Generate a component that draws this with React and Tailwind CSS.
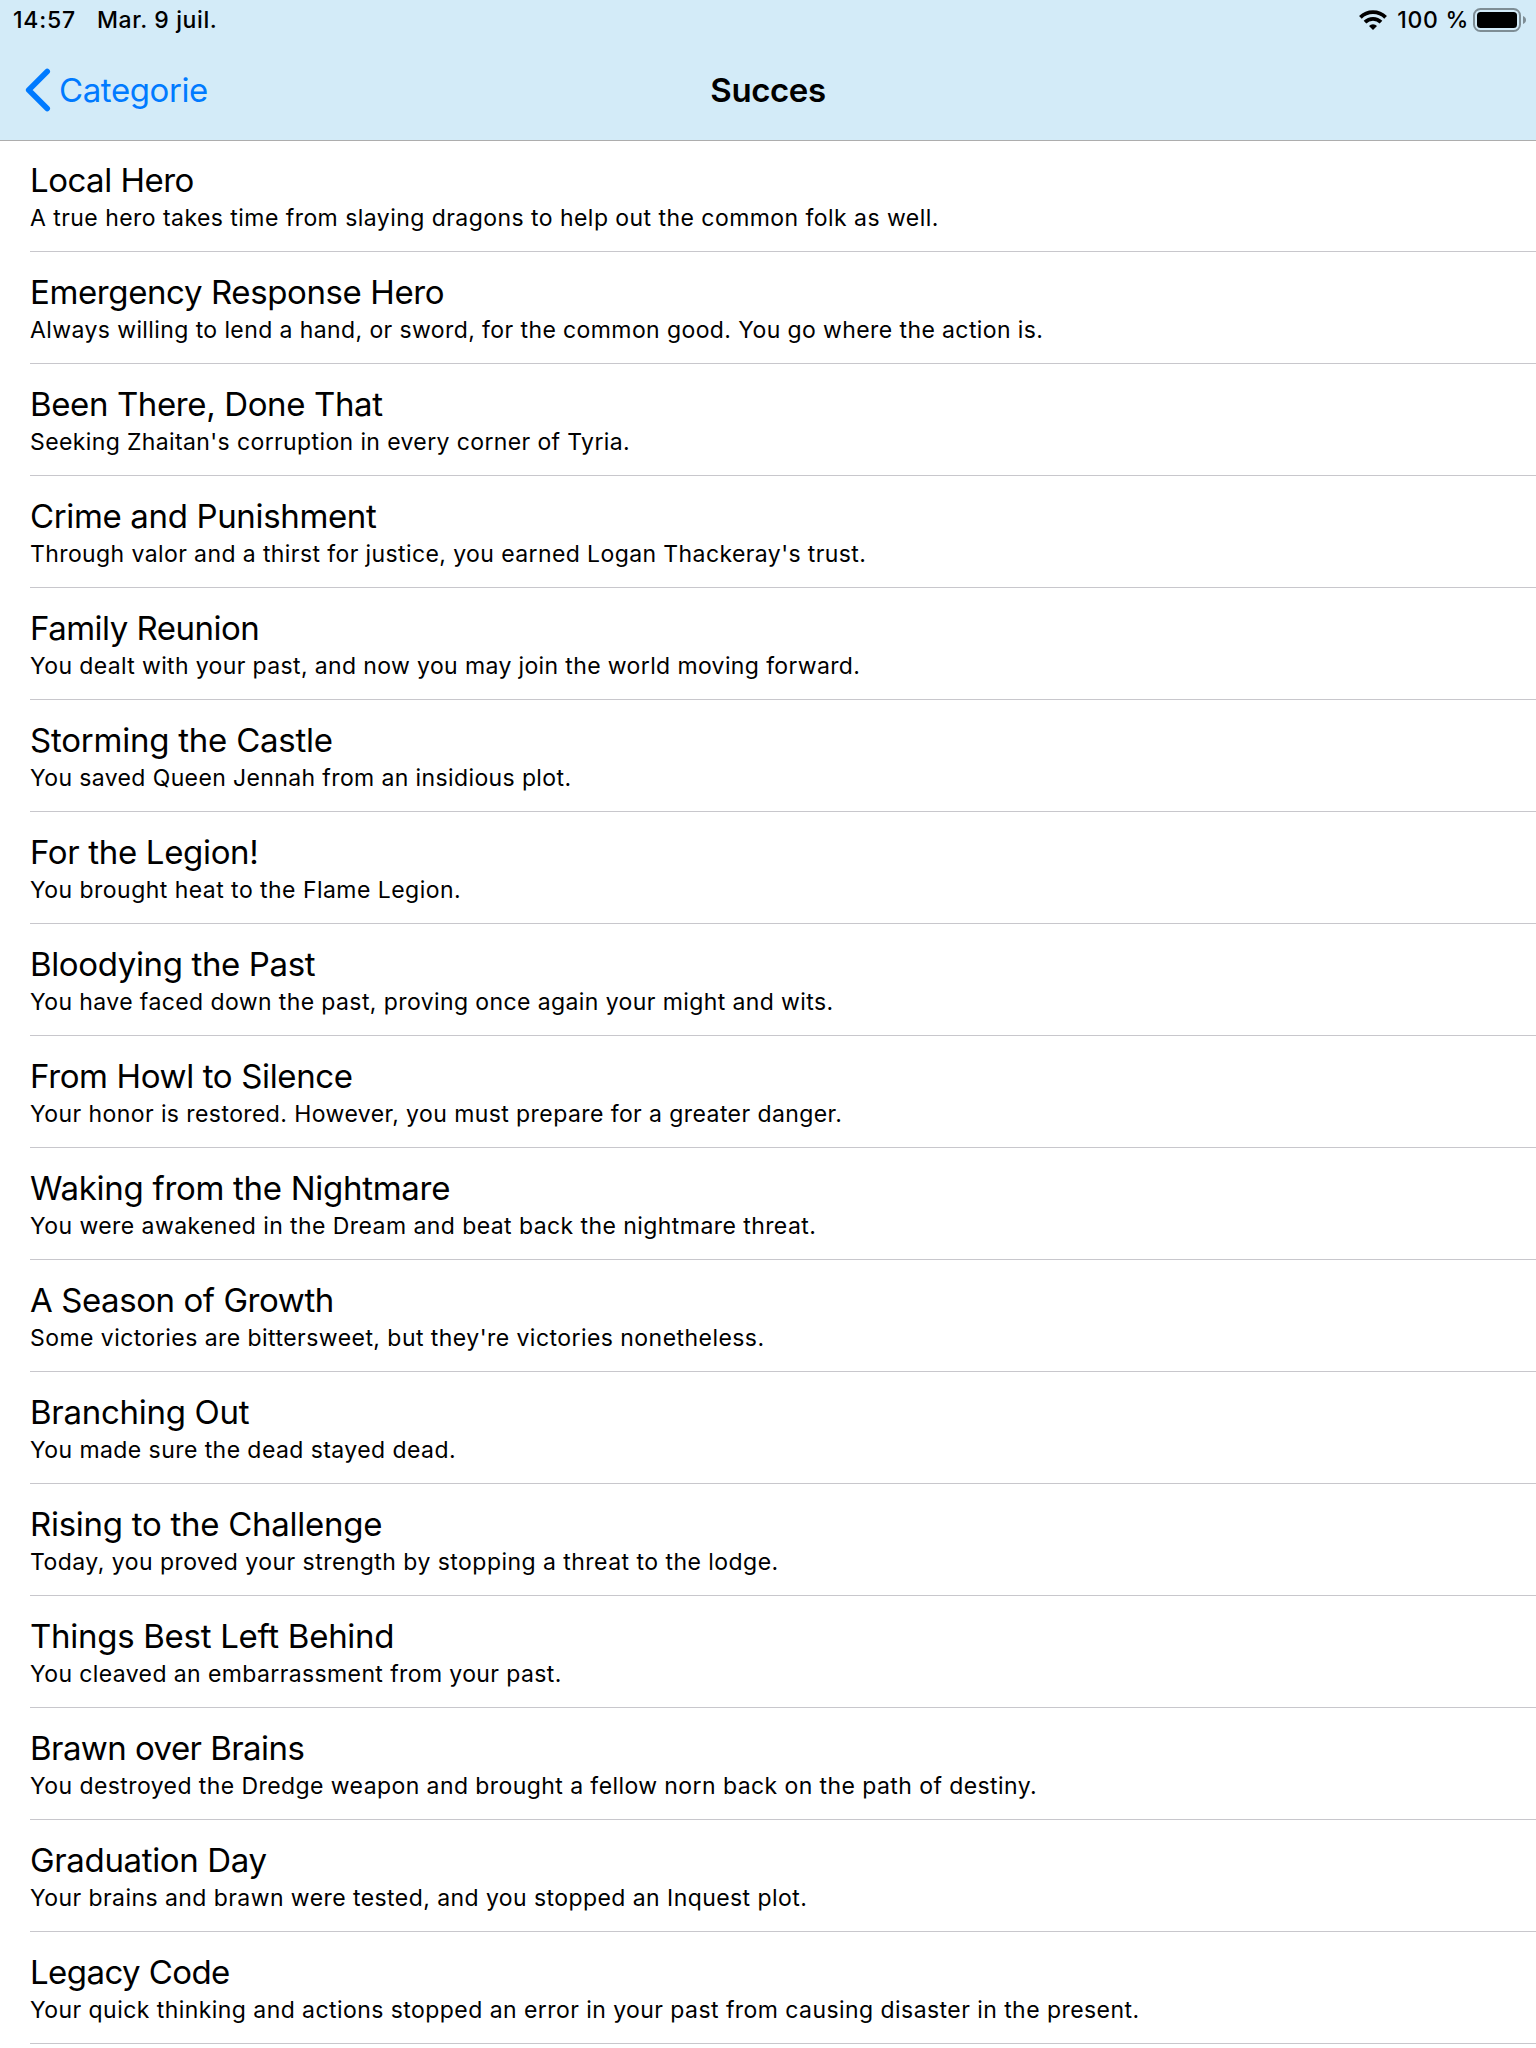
const achievements = [
  { title: "Local Hero", titleTracking: "tracking-[-0.5px]", description: "A true hero takes time from slaying dragons to help out the common folk as well.", tracking: "tracking-[0.45px]" },
  { title: "Emergency Response Hero", titleTracking: "tracking-[-0.39px]", description: "Always willing to lend a hand, or sword, for the common good. You go where the action is.", tracking: "tracking-[0.4px]" },
  { title: "Been There, Done That", titleTracking: "tracking-[-0.38px]", description: "Seeking Zhaitan's corruption in every corner of Tyria.", tracking: "tracking-[0.38px]" },
  { title: "Crime and Punishment", titleTracking: "tracking-[-0.35px]", description: "Through valor and a thirst for justice, you earned Logan Thackeray's trust.", tracking: "tracking-[0.4px]" },
  { title: "Family Reunion", titleTracking: "tracking-[-0.5px]", description: "You dealt with your past, and now you may join the world moving forward.", tracking: "tracking-[0.37px]" },
  { title: "Storming the Castle", titleTracking: "tracking-[-0.23px]", description: "You saved Queen Jennah from an insidious plot.", tracking: "tracking-[0.38px]" },
  { title: "For the Legion!", titleTracking: "tracking-[-0.33px]", description: "You brought heat to the Flame Legion.", tracking: "tracking-[0.46px]" },
  { title: "Bloodying the Past", titleTracking: "tracking-[-0.36px]", description: "You have faced down the past, proving once again your might and wits.", tracking: "tracking-[0.4px]" },
  { title: "From Howl to Silence", titleTracking: "tracking-[-0.36px]", description: "Your honor is restored. However, you must prepare for a greater danger.", tracking: "tracking-[0.42px]" },
  { title: "Waking from the Nightmare", titleTracking: "tracking-[-0.29px]", description: "You were awakened in the Dream and beat back the nightmare threat.", tracking: "tracking-[0.43px]" },
  { title: "A Season of Growth", titleTracking: "tracking-[-0.43px]", description: "Some victories are bittersweet, but they're victories nonetheless.", tracking: "tracking-[0.45px]" },
  { title: "Branching Out", titleTracking: "tracking-[-0.28px]", description: "You made sure the dead stayed dead.", tracking: "tracking-[0.43px]" },
  { title: "Rising to the Challenge", titleTracking: "tracking-[-0.27px]", description: "Today, you proved your strength by stopping a threat to the lodge.", tracking: "tracking-[0.46px]" },
  { title: "Things Best Left Behind", titleTracking: "tracking-[-0.28px]", description: "You cleaved an embarrassment from your past.", tracking: "tracking-[0.39px]" },
  { title: "Brawn over Brains", titleTracking: "tracking-[-0.56px]", description: "You destroyed the Dredge weapon and brought a fellow norn back on the path of destiny.", tracking: "tracking-[0.42px]" },
  { title: "Graduation Day", titleTracking: "tracking-[-0.35px]", description: "Your brains and brawn were tested, and you stopped an Inquest plot.", tracking: "tracking-[0.43px]" },
  { title: "Legacy Code", titleTracking: "tracking-[-0.57px]", description: "Your quick thinking and actions stopped an error in your past from causing disaster in the present.", tracking: "tracking-[0.44px]" },
];

function WifiIcon() {
  return (
    <svg className="h-5 w-7" viewBox="0 0 28 20" fill="none" stroke="black" strokeWidth="3.8">
      <path d="M1.4 7.3a18 18 0 0 1 25.2 0" />
      <path d="M6 12.100a11.4 11.4 0 0 1 16 0" />
      <path d="M14 20l-4-4a5.7 5.7 0 0 1 8 0z" fill="black" stroke="none" />
    </svg>
  );
}

function BatteryIcon() {
  return (
    <svg className="block h-6 w-[53px]" viewBox="0 0 53 24" fill="none">
      <rect x="1" y="1" width="46" height="22" rx="6.5" stroke="#7e8d95" strokeWidth="2" />
      <rect x="4" y="4" width="40" height="16" rx="3.5" fill="black" />
      <path d="M50 8c4 1.5 4 6.500 0 8z" fill="#7e8d95" />
    </svg>
  );
}

function StatusBar() {
  return (
    <div className="flex h-10 items-center justify-between pl-[13px] pr-[10px] text-[23px] leading-[40px] font-medium">
      <div className="flex gap-[21px]">
        <span className="tracking-[0.8px]">14:57</span>
        <span className="tracking-[0.6px]">Mar. 9 juil.</span>
      </div>
      <div className="flex items-center">
        <WifiIcon />
        <span className="ml-[10px] tracking-[0.7px]">100 %</span>
        <span className="ml-[4px]"><BatteryIcon /></span>
      </div>
    </div>
  );
}

function NavBar() {
  return (
    <div className="grid h-[100px] grid-cols-3 items-center">
      <button className="flex items-center pl-[25px] text-[#007aff]">
        <svg className="h-[44px] w-[26px]" viewBox="0 0 26 44" fill="none" stroke="currentColor" strokeWidth="5.6" strokeLinecap="round" strokeLinejoin="round">
          <path d="M22.200 3.500L3.700 22l18.500 18.500" />
        </svg>
        <span className="ml-[8px] text-[33px] leading-[40px] tracking-[-0.4px]">Categorie</span>
      </button>
      <h1 className="text-center text-[33px] leading-[40px] font-semibold tracking-[-0.4px]">Succes</h1>
    </div>
  );
}

export default function App() {
  return (
    <div className="h-[2048px] w-[1536px] overflow-hidden bg-white font-['Inter',sans-serif] text-black">
      <header className="h-[141px] border-b border-[#adadad] bg-[#d3ebf8]">
        <StatusBar />
        <NavBar />
      </header>
      <ul className="-mt-px pl-[30px]">
        {achievements.map(({ title, titleTracking, description, tracking }) => (
          <li key={title} className="h-28 border-b border-[#c8c7cc] pt-5 whitespace-nowrap">
            <div className={`text-[33px] leading-[40px] ${titleTracking}`}>{title}</div>
            <div className={`text-[23px] leading-[36px] ${tracking}`}>{description}</div>
          </li>
        ))}
      </ul>
    </div>
  );
}
